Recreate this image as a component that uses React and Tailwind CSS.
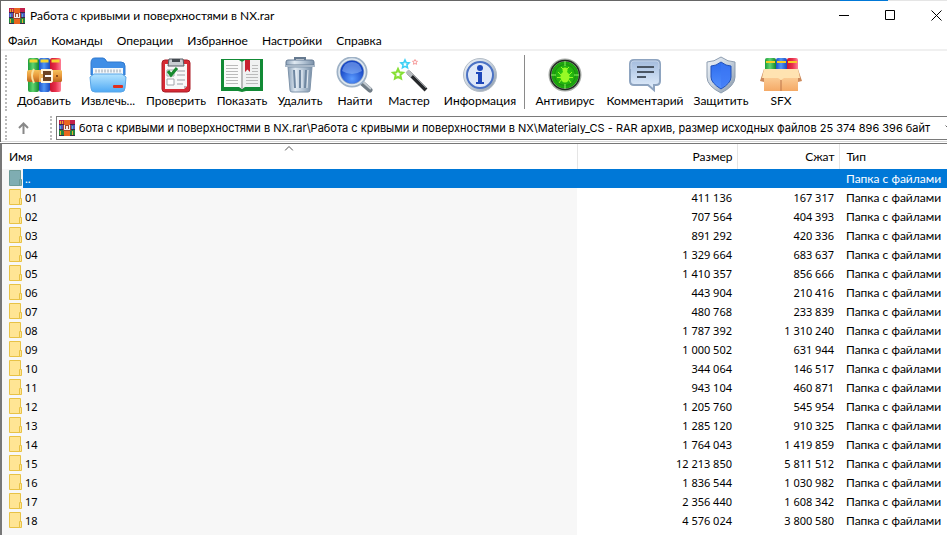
import clsx from 'clsx'

const menu = ['Файл', 'Команды', 'Операции', 'Избранное', 'Настройки', 'Справка']

const rows = [
  ['01', '411 136', '167 317'],
  ['02', '707 564', '404 393'],
  ['03', '891 292', '420 336'],
  ['04', '1 329 664', '683 637'],
  ['05', '1 410 357', '856 666'],
  ['06', '443 904', '210 416'],
  ['07', '480 768', '233 839'],
  ['08', '1 787 392', '1 310 240'],
  ['09', '1 000 502', '631 944'],
  ['10', '344 064', '146 517'],
  ['11', '943 104', '460 871'],
  ['12', '1 205 760', '545 954'],
  ['13', '1 285 120', '910 325'],
  ['14', '1 764 043', '1 419 859'],
  ['15', '12 213 850', '5 811 512'],
  ['16', '1 836 544', '1 030 982'],
  ['17', '2 356 440', '1 608 342'],
  ['18', '4 576 024', '3 800 580']
]

const archivePath =
  'бота с кривыми и поверхностями в NX.rar\\Работа с кривыми и поверхностями в NX\\Materialy_CS - RAR архив, размер исходных файлов 25 374 896 396 байт'

// Shared gradients for the toolbar icons
const Gradients = () => (
  <svg className="absolute size-0" aria-hidden="true">
    <defs>
      <linearGradient id="green">
        <stop offset="0" stopColor="#1f9d3a" />
        <stop offset=".45" stopColor="#5fd470" />
        <stop offset="1" stopColor="#12852c" />
      </linearGradient>
      <linearGradient id="blue">
        <stop offset="0" stopColor="#1b50c8" />
        <stop offset=".45" stopColor="#4f95f5" />
        <stop offset="1" stopColor="#1a48bd" />
      </linearGradient>
      <linearGradient id="red">
        <stop offset="0" stopColor="#c9132f" />
        <stop offset=".5" stopColor="#e8304c" />
        <stop offset="1" stopColor="#ff7f95" />
      </linearGradient>
      <linearGradient id="belt" x2="0" y2="1">
        <stop offset="0" stopColor="#f5c25c" />
        <stop offset=".5" stopColor="#e8983a" />
        <stop offset="1" stopColor="#b8651c" />
      </linearGradient>
      <linearGradient id="sky" x2="0" y2="1">
        <stop offset="0" stopColor="#b4e4ff" />
        <stop offset="1" stopColor="#4fa9f4" />
      </linearGradient>
      <linearGradient id="steel">
        <stop offset="0" stopColor="#8ba1b8" />
        <stop offset=".3" stopColor="#dfe8f1" />
        <stop offset=".6" stopColor="#b8c8d8" />
        <stop offset="1" stopColor="#7b91a9" />
      </linearGradient>
      <linearGradient id="silver" x2="1" y2="1">
        <stop offset="0" stopColor="#f1f5f9" />
        <stop offset=".5" stopColor="#c5d0dc" />
        <stop offset="1" stopColor="#8494a6" />
      </linearGradient>
      <linearGradient id="bubble" x2="0" y2="1">
        <stop offset="0" stopColor="#a3bbdc" />
        <stop offset=".5" stopColor="#c3d6ee" />
        <stop offset="1" stopColor="#e4effc" />
      </linearGradient>
      <linearGradient id="shield" x2="0" y2="1">
        <stop offset="0" stopColor="#2c6bed" />
        <stop offset="1" stopColor="#5390ff" />
      </linearGradient>
      <linearGradient id="box" x2="0" y2="1">
        <stop offset="0" stopColor="#ffdfae" />
        <stop offset="1" stopColor="#f4a966" />
      </linearGradient>
      <radialGradient id="lens" cy=".75">
        <stop offset="0" stopColor="#5b9bff" />
        <stop offset="1" stopColor="#1746c4" />
      </radialGradient>
      <radialGradient id="radar">
        <stop offset="0" stopColor="#33d411" />
        <stop offset="1" stopColor="#179a0c" />
      </radialGradient>
    </defs>
  </svg>
)

const AddIcon = () => (
  <svg width="36" height="36" viewBox="0 0 36 36">
    <rect x="2" y="1" width="11" height="34" rx="2" fill="url(#green)" />
    <rect x="13" y="1" width="11" height="34" rx="2" fill="url(#blue)" />
    <rect x="24" y="1" width="11" height="34" rx="2" fill="url(#red)" />
    <path d="M3.500 4h8M14.500 4h8M25.500 4h8" stroke="#f6d52e" strokeWidth="3" />
    <path d="M1 15q0-2 2-2h32l1 1v10l-1 1H3q-2 0-2-2z" fill="url(#belt)" />
    <path d="M8 12q-4 6 0 14" fill="none" stroke="#fae0a0" strokeWidth="2" />
    <path d="M13 13h4v12h-4z" fill="#f0b45a" />
    <path d="M17 14h8v10h-8z" fill="#6d4424" />
    <path d="M16 17v-4h9l1 1v10l-1 1h-9v-4" fill="none" stroke="#fff3d8" strokeWidth="2" />
    <path d="M19 19h7" stroke="#fff" strokeWidth="2" />
    <path d="M30 19h2" stroke="#8c4a16" strokeWidth="2" />
  </svg>
)

const ExtractIcon = () => (
  <svg width="38" height="36" viewBox="0 0 38 36">
    <path d="M2 6q0-5 4-5h8q2 0 4 4h14q4 0 4 4v9H2z" fill="#3f8ee6" stroke="#2f78ce" />
    <path d="M4 11h30v9H4z" fill="#f4f8fb" />
    <path d="M6 14h27" stroke="#c4ccd4" strokeWidth="3" strokeDasharray="2 1" />
    <path d="M1 20l4-3h28l4 3-1 11q0 4-4 4H6q-4 0-4-4z" fill="url(#sky)" stroke="#5aa6e8" />
    <rect x="24" y="28" width="10" height="3" rx="1" fill="#df2f1e" />
  </svg>
)

const TestIcon = () => (
  <svg width="30" height="36" viewBox="0 0 30 36">
    <rect x="1" y="3" width="28" height="32" rx="3" fill="#d62b34" stroke="#a91c26" />
    <path d="M4 7h22v22l-3 3H4z" fill="#f8f8f8" />
    <path d="M8 2h14l1 7H7z" fill="#c9cdd2" stroke="#555b62" />
    <path d="M11 2h8v3h-8z" fill="#444a50" />
    <path d="M6 13h7v6H6zM6 22h7v6H6z" fill="#fff" stroke="#a0a5aa" />
    <path d="M16 14h8M16 18h8M16 23h8M16 27h6" stroke="#9aa0a6" />
    <path d="M7 14l3 4 6-7" fill="none" stroke="#168a2d" strokeWidth="3" />
    <path d="M26 29l-3 3v-3z" fill="#b2b6ba" />
  </svg>
)

const ViewIcon = () => (
  <svg width="42" height="36" viewBox="0 0 42 36">
    <path d="M0 2h42v32H25l-4 1-4-1H0z" fill="#128a35" />
    <path d="M3 3h15l3 2v27l-3-2H3z" fill="#fafafa" />
    <path d="M39 3H24l-3 2v27l3-2h15z" fill="#f0f1f1" />
    <path d="M21 5v27" stroke="#b8b8b8" strokeWidth="2" />
    <path d="M5 8.500h12M5 11.500h12M5 14.500h12M5 17.500h12M5 20.500h12M5 23.500h12M5 26.500h12M25 17.500h12M25 20.500h12M25 23.500h12M25 26.500h12M31 8.500h6M31 11.500h6M31 14.500h6" stroke="#bbb" />
    <path d="M24 3h5v12l-2.500-2.500L24 15z" fill="#c8202f" />
  </svg>
)

const DeleteIcon = () => (
  <svg width="32" height="36" viewBox="0 0 32 36">
    <path d="M11 3V1h10v2" fill="none" stroke="#65798f" strokeWidth="2" />
    <path d="M2 5q0-2 2-2h24q2 0 2 2v3H2z" fill="url(#steel)" stroke="#647a93" />
    <path d="M4 10h24l-2 23q0 2-2 2H8q-2 0-2-2z" fill="url(#steel)" stroke="#7f94aa" />
    <path d="M10 13l1 18M16 13v18M22 13l-1 18" stroke="#6f87a1" strokeWidth="2" />
    <path d="M12 13l1 18M18 13v18M24 13l-1 18" stroke="#e7eef5" />
    <path d="M1 9h30" stroke="#a9b8c8" strokeWidth="2" />
  </svg>
)

const FindIcon = () => (
  <svg width="38" height="36" viewBox="0 0 38 36">
    <path d="M26 26l8 7" stroke="#6f7b85" strokeWidth="5" strokeLinecap="round" />
    <path d="M26 24l9 8" stroke="#c5ccd2" strokeWidth="2" />
    <circle cx="16" cy="15" r="13.500" fill="url(#lens)" stroke="#9fb2c6" strokeWidth="4" />
    <circle cx="16" cy="15" r="13" fill="none" stroke="#e1eaf3" strokeWidth="1.500" />
    <path d="M6 14Q8 5 16 5t10 9q-10 6-20 0z" fill="#8fb6f8" opacity=".55" />
  </svg>
)

const starPath = 'M0-5l1.500 3.300 3.500.4-2.600 2.400.7 3.500L0 2.900l-3.100 1.700.7-3.500L-5-1.300l3.500-.4z'

const WizardIcon = () => (
  <svg width="38" height="36" viewBox="0 0 38 36">
    <g fill="#fff">
      <path d={starPath} transform="translate(15 7) scale(.8)" stroke="#3fd0f5" strokeWidth="2" />
      <path d={starPath} transform="translate(8 17)" stroke="#86e035" strokeWidth="2" />
      <path d={starPath} transform="translate(25 5) scale(.5)" stroke="#f79a9a" strokeWidth="2" />
    </g>
    <path d="M18 15l18 18" stroke="#26282b" strokeWidth="4" />
    <path d="M19 14l17 17" stroke="#8c9095" />
    <path d="M17 14l5 5" stroke="#b6babe" strokeWidth="4" />
  </svg>
)

const InfoIcon = () => (
  <svg width="36" height="36" viewBox="0 0 36 36">
    <circle cx="18" cy="18" r="16.500" fill="url(#silver)" stroke="#b5bec8" />
    <circle cx="18" cy="18" r="13" fill="#dfe8f8" stroke="#4b72c4" strokeWidth="2" />
    <circle cx="18" cy="11" r="3" fill="#1e48ba" />
    <path d="M14 15h6v10h2v2h-8v-2h2v-8h-2z" fill="#1e48ba" />
  </svg>
)

const VirusIcon = () => (
  <svg width="36" height="36" viewBox="0 0 36 36">
    <circle cx="18" cy="18" r="15" fill="url(#radar)" stroke="#a8aca8" strokeWidth="3" />
    <circle cx="18" cy="18" r="14.500" fill="none" stroke="#222b22" strokeWidth="1.500" />
    <circle cx="18" cy="18" r="10.500" fill="none" stroke="#1b8a12" />
    <path d="M18 4v5M18 27v5M4 18h5M27 18h5" stroke="#8cf463" />
    <ellipse cx="18" cy="20" rx="4.500" ry="5.500" fill="#98fa26" />
    <circle cx="18" cy="13" r="2.500" fill="#98fa26" />
    <path d="M14 18l-3-3M22 18l3-3M14 20.500h-4M22 20.500h4M14 23l-2 3M22 23l2 3M16 12l-2-2M20 12l2-2" stroke="#98fa26" />
  </svg>
)

const CommentIcon = () => (
  <svg width="34" height="36" viewBox="0 0 34 36">
    <path d="M6 3h22q4 0 4 4v17q0 4-4 4h-2v5l-6-5H6q-4 0-4-4V7q0-4 4-4z" fill="url(#bubble)" stroke="#8ea4c0" strokeWidth="2" />
    <path d="M3 12V7q0-3 3-3h22q3 0 3 3v5" fill="none" stroke="#c4d3e8" />
    <path d="M9 10h17M9 15h17M9 20h9" stroke="#4a5664" strokeWidth="2" />
  </svg>
)

const ProtectIcon = () => (
  <svg width="32" height="38" viewBox="0 0 32 38">
    <path d="M16 1q7 5 14 5v15q0 9-14 16Q2 30 2 21V6q7 0 14-5z" fill="url(#silver)" stroke="#8d9db0" />
    <path d="M16 6q5 4 10 4v11q0 6-10 12Q6 27 6 21V10q5 0 10-4z" fill="url(#shield)" stroke="#2051ba" />
    <path d="M16 7q4 3 9 4v10q0 5-9 11z" fill="#3d78f5" opacity=".6" />
  </svg>
)

const SfxIcon = () => (
  <svg width="42" height="36" viewBox="0 0 42 36">
    <rect x="5" y="1" width="11" height="14" rx="2" fill="url(#green)" />
    <rect x="16" y="1" width="11" height="14" rx="2" fill="url(#blue)" />
    <rect x="27" y="1" width="11" height="14" rx="2" fill="url(#red)" />
    <path d="M6 5h9M17 5h9M28 5h9" stroke="#f6cb22" strokeWidth="2" />
    <path d="M4 13h34v21H4z" fill="url(#box)" />
    <path d="M4 12L0 24l4 1zM38 12l4 12-4 1z" fill="#cd8a5b" />
    <path d="M4 12h34l2 9H24l-3 2-3-2H2z" fill="#ffe3b1" />
    <path d="M21 23v11" stroke="#bb754b" />
  </svg>
)

const tools = [
  {label: 'Добавить', icon: AddIcon, width: 'w-16'},
  {label: 'Извлечь...', icon: ExtractIcon, width: 'w-16'},
  {label: 'Проверить', icon: TestIcon, width: 'w-[72px]'},
  {label: 'Показать', icon: ViewIcon, width: 'w-[60px]'},
  {label: 'Удалить', icon: DeleteIcon, width: 'w-14'},
  {label: 'Найти', icon: FindIcon, width: 'w-[54px]'},
  {label: 'Мастер', icon: WizardIcon, width: 'w-[54px]'},
  {label: 'Информация', icon: InfoIcon, width: 'w-[88px]'}
]

const extraTools = [
  {label: 'Антивирус', icon: VirusIcon, width: 'w-[72px]'},
  {label: 'Комментарий', icon: CommentIcon, width: 'w-[88px]'},
  {label: 'Защитить', icon: ProtectIcon, width: 'w-16'},
  {label: 'SFX', icon: SfxIcon, width: 'w-14'}
]

// Stack of books with a belt, the application's own icon
const RarIcon = () => (
  <svg width="16" height="16" viewBox="0 0 16 16" className="shrink-0" shapeRendering="crispEdges">
    <path d="M0 0h16v5H0z" fill="#c2204c" />
    <path d="M0 5h16v5H0z" fill="#5254b8" />
    <path d="M0 10h16v6H0z" fill="#22863f" />
    <path d="M0 4h16v1H0zM0 9h16v1H0zM0 15h16v1H0z" fill="#3b2748" />
    <path d="M1 1h1v3H1zM1 11h1v4H1zM3 1h1v3H3zM13 11h1v4h-1z" fill="#eab129" />
    <path d="M1 6h1v3H1zM13 6h1v3h-1z" fill="#49b5d8" />
    <path d="M5 0h6v16H5z" fill="#e8661f" />
    <path d="M4 5h8v6H4z" fill="#9c4630" />
    <path d="M5 5h1v5H5zM10 5h1v5h-1zM6 9h4v1H6zM7 6h2v3H7z" fill="#f5ebe5" />
  </svg>
)

const FolderIcon = ({up}) => (
  <svg
    width="13"
    height="16"
    viewBox="0 0 13 16"
    className={clsx('block', up ? 'text-[#6d9b98]' : 'text-[#e8c245]')}
  >
    <path d="M.5.5h11v15H.5z" fill={up ? '#7fadb2' : '#ffe594'} stroke="currentColor" />
    <path d="M10.500 9.500h2v6h-2z" fill={up ? '#83aeb0' : '#ffe594'} stroke="currentColor" />
  </svg>
)

const ToolButton = ({label, icon: Icon, width}) => (
  <button className={clsx('flex flex-col items-center shrink-0', width)}>
    <span className="flex h-10 items-center justify-center">
      <Icon />
    </span>
    <span className="leading-3 whitespace-nowrap">{label}</span>
  </button>
)

const TitleBar = () => (
  <header className="flex h-[29px] items-center">
    <div className="flex grow items-center gap-[5px] pl-2">
      <RarIcon />
      <h1>Работа с кривыми и поверхностями в NX.rar</h1>
    </div>
    <button aria-label="Свернуть" className="flex h-full w-[46px] items-center justify-center">
      <svg width="11" height="11" viewBox="0 0 11 11" stroke="#000">
        <path d="M0 5.500h10" />
      </svg>
    </button>
    <button aria-label="Развернуть" className="flex h-full w-[46px] items-center justify-center">
      <svg width="11" height="11" viewBox="0 0 11 11" fill="none" stroke="#000">
        <path d="M.5.5h9v9h-9z" />
      </svg>
    </button>
    <button aria-label="Закрыть" className="flex h-full w-[34px] items-center pl-[18px]">
      <svg width="11" height="11" viewBox="0 0 11 11" stroke="#000">
        <path d="M.5.5l10 10M10.500.5l-10 10" />
      </svg>
    </button>
  </header>
)

export default function App() {
  return (
    <div className="min-h-screen overflow-hidden bg-white font-['Lato','Open_Sans',sans-serif] text-[12px] leading-[19px] text-black">
      <Gradients />
      <div className="flex h-px bg-[#666]">
        <div className="grow" />
        <div className="w-12 bg-[#0078d7]" />
        <div className="w-[59px] bg-[#e5e5e5]" />
      </div>

      <div className="border-l border-[#666]">
        <TitleBar />

        <nav className="flex h-[21px] items-end border-b-2 border-[#f0f0f0] pl-[7px]">
          {menu.map((item) => (
            <button key={item} className="mr-[14px] leading-4">
              {item}
            </button>
          ))}
        </nav>

        <div className="flex h-[60px] pt-1 pl-1">
          <div className="mr-[5px] h-14 border-l-2 border-dotted border-[#bbb]" />
          {tools.map((tool) => (
            <ToolButton key={tool.label} {...tool} />
          ))}
          <div className="mr-1 h-[54px] w-px bg-[#8a8a8a]" />
          {extraTools.map((tool) => (
            <ToolButton key={tool.label} {...tool} />
          ))}
        </div>

        <div className="flex h-[31px] items-center border-b border-[#d9d9d9] pt-1 pl-1">
          <div className="h-6 border-l-2 border-dotted border-[#bbb]" />
          <button aria-label="Вверх" className="flex w-[43px] items-center pl-[11px]">
            <svg width="11" height="12" viewBox="0 0 11 12" fill="none" stroke="#888" strokeWidth="2">
              <path d="M5.500 12V1M1 6l4.500-4.500L10 6" />
            </svg>
          </button>
          <div className="h-6 border-l-2 border-dotted border-[#bbb]" />
          <div className="ml-1 flex h-6 min-w-0 grow items-center border border-r-0 border-[#7a7a7a] pl-[2px]">
            <RarIcon />
            <input
              aria-label="Путь"
              readOnly
              value={archivePath}
              className="ml-1 h-5 min-w-0 grow bg-transparent font-['Inter','Open_Sans',sans-serif] text-[11px] outline-none"
            />
            <button aria-label="Показать список" className="w-[2px] overflow-hidden">
              <svg width="9" height="6" viewBox="0 0 9 6" fill="none" stroke="#666">
                <path d="M.5.5l4 4 4-4" />
              </svg>
            </button>
          </div>
        </div>
      </div>

      <main className="mt-px border-t border-l-2 border-[#777]">
        <table className="w-full table-fixed border-collapse">
          <colgroup>
            <col />
            <col className="w-40" />
            <col className="w-[102px]" />
            <col className="w-[108px]" />
          </colgroup>
          <thead>
            <tr className="h-[25px]">
              <th className="relative border-r border-[#e5e5e5] pl-[7px] text-left font-normal">
                Имя
                <svg
                  width="9"
                  height="5"
                  viewBox="0 0 9 5"
                  fill="none"
                  stroke="#555"
                  className="absolute top-[2px] left-1/2 -translate-x-1/2"
                >
                  <path d="M.5 4.500l4-4 4 4" />
                </svg>
              </th>
              <th className="border-r border-[#e5e5e5] pr-1 text-right font-normal">Размер</th>
              <th className="border-r border-[#e5e5e5] pr-1 text-right font-normal">Сжат</th>
              <th className="pl-[7px] text-left font-normal">Тип</th>
            </tr>
          </thead>
          <tbody>
            <tr className="h-[19px] bg-[#0078d7] text-white">
              <td className="p-0">
                <div className="flex">
                  <div className="w-[21px] bg-[#f7f7f7] pt-px pl-[7px]">
                    <FolderIcon up />
                  </div>
                  <span className="pl-[2px]">..</span>
                </div>
              </td>
              <td />
              <td />
              <td className="p-0 pl-[7px] whitespace-nowrap">Папка с файлами</td>
            </tr>
            {rows.map(([name, size, packed]) => (
              <tr key={name} className="h-[19px] font-['Noto_Sans','Open_Sans',sans-serif] text-[11px]">
                <td className="bg-[#f7f7f7] p-0">
                  <div className="flex">
                    <div className="w-[21px] pt-px pl-[7px]">
                      <FolderIcon />
                    </div>
                    <span className="pl-[2px]">{name}</span>
                  </div>
                </td>
                <td className="p-0 pr-[5px] text-right">{size}</td>
                <td className="p-0 pr-[5px] text-right">{packed}</td>
                <td className="p-0 pl-[7px] font-['Lato','Open_Sans',sans-serif] text-[12px] whitespace-nowrap">
                  Папка с файлами
                </td>
              </tr>
            ))}
          </tbody>
        </table>
        {/* sorted column keeps its shade below the last row */}
        <div className="mr-[370px] h-[5px] bg-[#f7f7f7]" />
      </main>
    </div>
  )
}
